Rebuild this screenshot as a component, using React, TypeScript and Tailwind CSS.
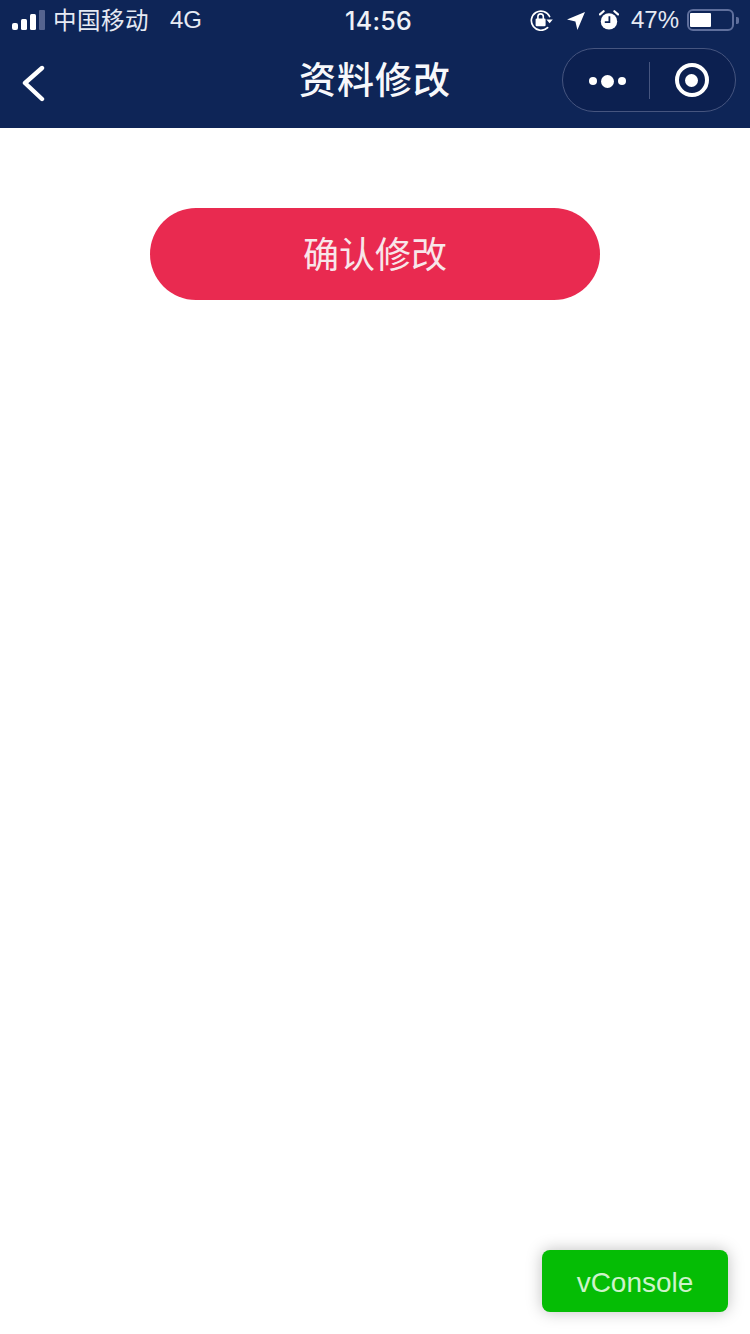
const cjk = "font-['Liberation_Sans','Noto_Sans_CJK_SC',sans-serif]";

function Signal() {
  return (
    <svg width="33" height="20" viewBox="0 0 33 20" className="block">
      <rect x="0" y="13" width="6" height="7" rx="2" fill="#fff" />
      <rect x="9" y="9" width="6" height="11" rx="1.5" fill="#fff" />
      <rect x="18" y="4" width="6" height="16" rx="1.5" fill="#fff" />
      <rect x="27" y="0" width="6" height="20" rx="1" fill="#55648f" />
    </svg>
  );
}

function RotationLock() {
  return (
    <svg width="23" height="22" viewBox="0 0 23 22" className="block" fill="none">
      <path d="M19.6 7.5A9.6 9.6 0 1 0 17.6 18.6" stroke="#fff" strokeWidth="1.7" strokeLinecap="round" />
      <path d="M16.4 10.5h6.4l-3.2 3.8z" fill="#fff" />
      <rect x="5.6" y="9.6" width="10" height="7.6" rx="1.2" fill="#fff" />
      <path d="M7.9 10V7.6a2.7 2.7 0 0 1 5.4 0V10" stroke="#fff" strokeWidth="1.6" />
    </svg>
  );
}

function LocationArrow() {
  return (
    <svg width="18" height="18" viewBox="0 0 18 18" className="block">
      <path d="M18 0 10.4 18 8.4 9.6 0 7.6z" fill="#fff" />
    </svg>
  );
}

function Alarm() {
  return (
    <svg width="20" height="20" viewBox="0 0 20 20" className="block">
      <circle cx="10" cy="11.4" r="8.2" fill="#fff" />
      <path d="M10.4 6.2V12.2H5.8" fill="none" stroke="#0e2557" strokeWidth="1.8" />
      <path d="M1 4.4 4.6 1.2M19 4.4 15.4 1.2" stroke="#fff" strokeWidth="2.2" strokeLinecap="round" />
    </svg>
  );
}

function Battery() {
  return (
    <div className="flex items-center">
      <div className="flex h-[22px] w-[47px] items-center rounded-[6px] border-2 border-[#5f6f9c] px-[1px] py-[2px]">
        <div className="h-full w-[21px] rounded-[1px] bg-white" />
      </div>
      <div className="ml-[2px] h-[7px] w-[3px] rounded-r-[2px] bg-[#5f6f9c]" />
    </div>
  );
}

function StatusBar() {
  return (
    <div className={`relative flex h-[40px] items-center justify-between pl-[12px] pr-[11px] text-white ${cjk}`}>
      <div className="flex items-center">
        <Signal />
        <span className="ml-[8px] pt-[4px] text-[23.5px] leading-none tracking-[0.5px] text-[#e6eaf3]">中国移动</span>
        <span className="ml-[21px] text-[24px] leading-none text-[#e6eaf3]">4G</span>
      </div>
      <span className="absolute left-[345px] top-[6px] text-[25px] font-['Inter',sans-serif] font-medium leading-[30px] tracking-[0.3px] text-[#eef1f7]">
        14:56
      </span>
      <div className="flex items-center">
        <RotationLock />
        <div className="ml-[14px] pt-[2px]"><LocationArrow /></div>
        <div className="ml-[14px]"><Alarm /></div>
        <span className="ml-[12px] text-[24px] leading-none text-[#e6eaf3]">47%</span>
        <div className="ml-[8px]"><Battery /></div>
      </div>
    </div>
  );
}

function NavBar() {
  return (
    <div className="relative flex h-[88px] items-center justify-center">
      <svg width="26" height="38" viewBox="0 0 26 38" className="absolute left-[20px] top-[24px]" fill="none">
        <path d="M22 4 5 19 22 35" stroke="#fff" strokeWidth="4.4" strokeLinecap="round" strokeLinejoin="round" />
      </svg>
      <h1 className={`-mt-[6px] text-[37px] font-medium leading-none tracking-[1px] text-[#f7f8fb] ${cjk}`}>资料修改</h1>
      <div className="absolute right-[14px] top-[8px] flex h-[64px] w-[174px] items-center rounded-full border border-[#46557f] bg-[#0c2050]">
        <div className="flex w-[88px] items-center justify-center gap-[4px] pt-[2px]">
          <span className="h-[8px] w-[8px] rounded-full bg-white" />
          <span className="h-[13px] w-[13px] rounded-full bg-white" />
          <span className="h-[8px] w-[8px] rounded-full bg-white" />
        </div>
        <div className="-ml-[2px] h-[37px] w-px bg-[#46557f]" />
        <div className="flex flex-1 items-center justify-center">
          <div className="-ml-[2px] flex h-[34px] w-[34px] items-center justify-center rounded-full border-[4px] border-white">
            <span className="h-[13px] w-[13px] rounded-full bg-white" />
          </div>
        </div>
      </div>
    </div>
  );
}

export default function App() {
  return (
    <div className="relative h-[1334px] w-[750px] overflow-hidden bg-white">
      <header className="bg-[#0e2557]">
        <StatusBar />
        <NavBar />
      </header>
      <main className="flex justify-center pt-[80px]">
        <button className={`h-[92px] w-[450px] rounded-full bg-[#e92a50] pt-[4px] text-[36px] leading-none text-[#f8e6ea] ${cjk}`}>
          确认修改
        </button>
      </main>
      <div className="absolute left-[542px] top-[1250px] flex h-[62px] w-[186px] items-center justify-center rounded-[8px] bg-[#05bd05] pt-[4px] text-[28px] font-['Liberation_Sans',sans-serif] text-[#cdf3ca] shadow-[0_0_16px_rgba(0,0,0,0.25)]">
        vConsole
      </div>
    </div>
  );
}
